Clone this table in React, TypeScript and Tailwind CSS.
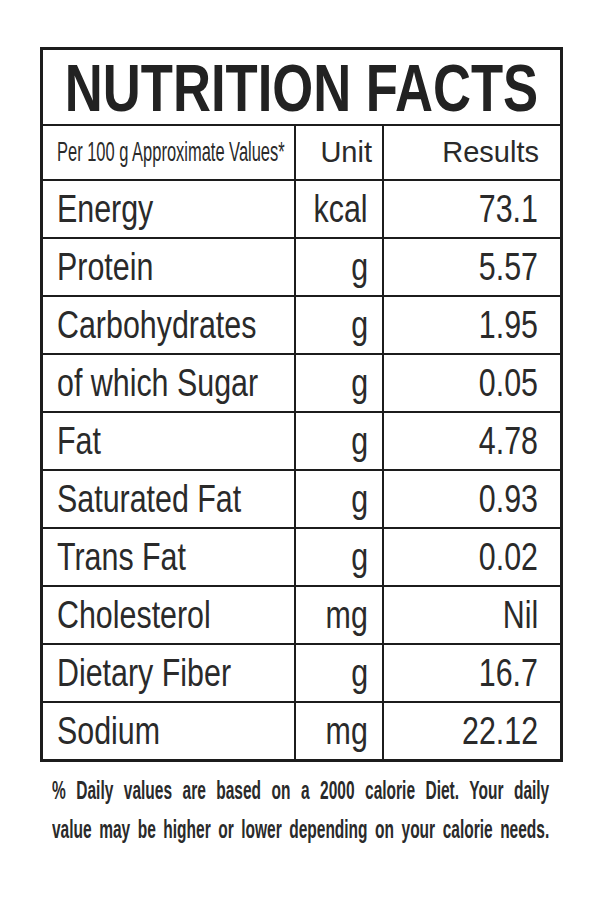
const rows: [string, string, string][] = [
  ['Energy', 'kcal', '73.1'],
  ['Protein', 'g', '5.57'],
  ['Carbohydrates', 'g', '1.95'],
  ['of which Sugar', 'g', '0.05'],
  ['Fat', 'g', '4.78'],
  ['Saturated Fat', 'g', '0.93'],
  ['Trans Fat', 'g', '0.02'],
  ['Cholesterol', 'mg', 'Nil'],
  ['Dietary Fiber', 'g', '16.7'],
  ['Sodium', 'mg', '22.12'],
];

// no condensed face installed, so Arial-width Liberation Sans squeezed with scale-x
export default function App() {
  return (
    <div className="min-h-[897px] w-[600px] overflow-hidden bg-white pt-[47px] font-['Liberation_Sans',Arial,sans-serif] text-[#2a2a2a]">
      <div className="ml-[40px] w-[523px] border-[3px] border-[#1c1c1c]">
        <div className="flex h-[74px] items-center justify-center">
          <h1 className="inline-block origin-center scale-x-[0.785] whitespace-nowrap text-[67px] font-bold leading-none text-[#222]">
            NUTRITION FACTS
          </h1>
        </div>
        <div className="flex h-[55px] border-t-2 border-[#1c1c1c]">
          <div className="flex w-[251px] items-center pl-[14px]">
            <span className="inline-block origin-left scale-x-[0.61] whitespace-nowrap text-[27px] leading-none">
              Per 100 g Approximate Values*
            </span>
          </div>
          <div className="flex w-[88px] items-center justify-end border-l-2 border-[#1c1c1c] pr-[10px] text-[29px] leading-none">
            Unit
          </div>
          <div className="flex flex-1 items-center justify-end border-l-2 border-[#1c1c1c] pr-[21px] text-[29px] leading-none">
            Results
          </div>
        </div>
        {rows.map(([name, unit, value]) => (
          <div key={name} className="flex h-[58px] border-t-2 border-[#1c1c1c] text-[38px] leading-none">
            <div className="flex w-[251px] items-center pl-[14px]">
              <span className="inline-block origin-left scale-x-[0.8] whitespace-nowrap">{name}</span>
            </div>
            <div className="flex w-[88px] items-center justify-end border-l-2 border-[#1c1c1c] pr-[14px]">
              <span className="inline-block origin-right scale-x-[0.8] whitespace-nowrap">{unit}</span>
            </div>
            <div className="flex flex-1 items-center justify-end border-l-2 border-[#1c1c1c] pr-[22px]">
              <span className="inline-block origin-right scale-x-[0.8] whitespace-nowrap">{value}</span>
            </div>
          </div>
        ))}
      </div>
      <div className="ml-[52px] mt-[9px] w-[497px]">
        <div className="w-[802px] origin-left scale-x-[0.62] text-[25px] font-bold leading-[39px] text-[#2a2a2a]">
          <div className="text-justify [text-align-last:justify]">
            % Daily values are based on a 2000 calorie Diet. Your daily
          </div>
          <div className="text-justify [text-align-last:justify]">
            value may be higher or lower depending on your calorie needs.
          </div>
        </div>
      </div>
    </div>
  );
}
